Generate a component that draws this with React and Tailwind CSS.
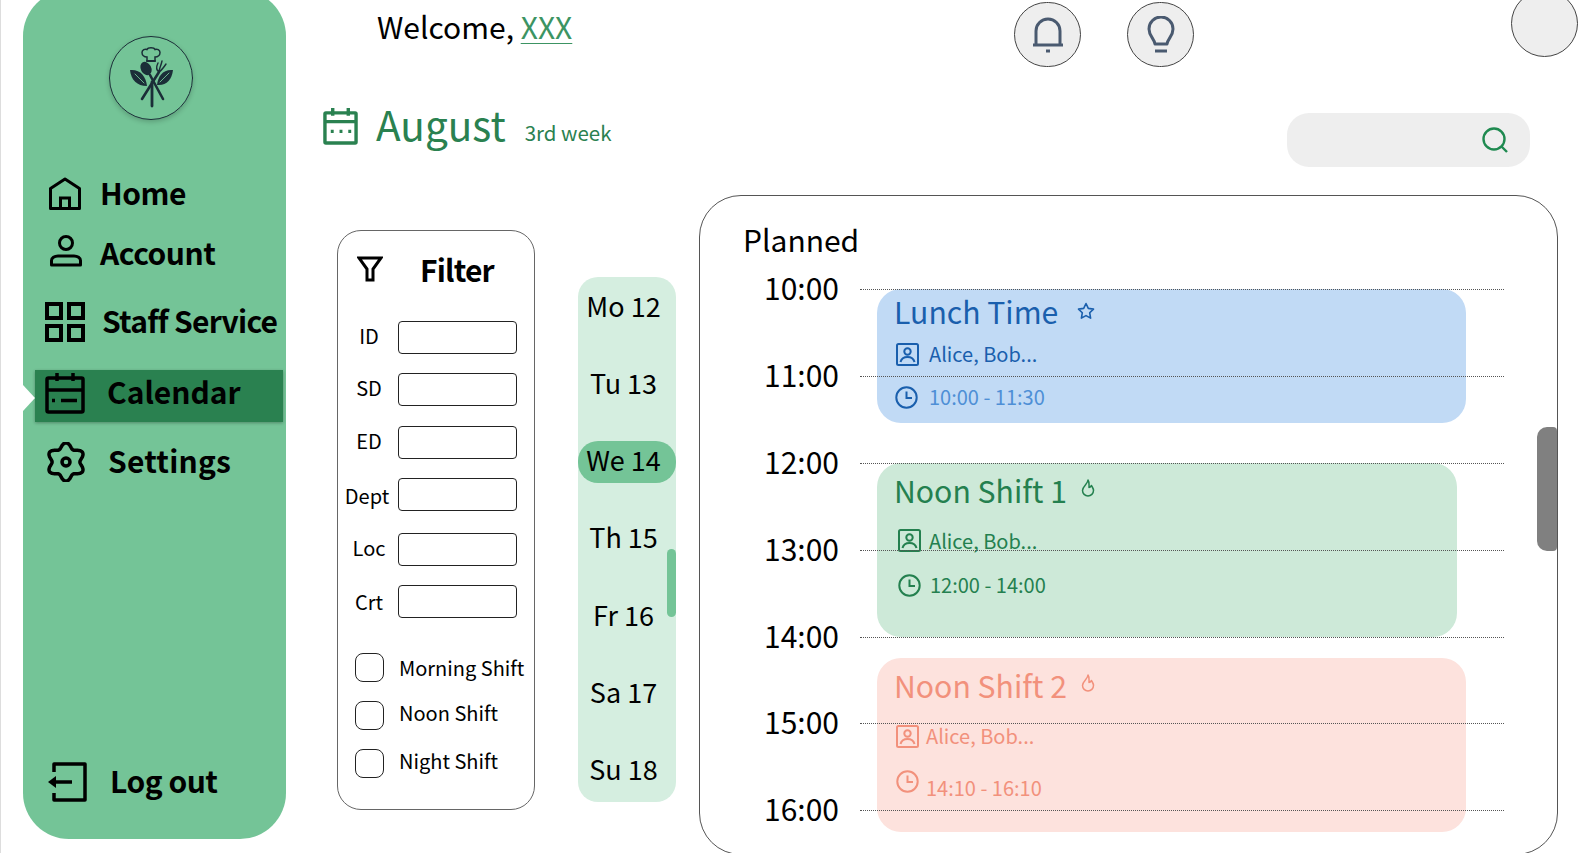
import React from 'react'

const fields = [
  { label: 'ID', rowClass: 'h-[52px]', labelClass: 'pl-[2px] pb-[4px]' },
  { label: 'SD', rowClass: 'h-[53px]', labelClass: 'pl-[2px] pb-[4px]' },
  { label: 'ED', rowClass: 'h-[52px]', labelClass: 'pl-[2px] pb-[4px]' },
  { label: 'Dept', rowClass: 'h-[55px]', labelClass: 'pr-[2px] pt-[2px]' },
  { label: 'Loc', rowClass: 'h-[52px]', labelClass: 'pl-[2px] pb-[4px]' },
  { label: 'Crt', rowClass: 'h-[52px]', labelClass: 'pl-[2px]' },
]

const shifts = [
  { label: 'Morning Shift', labelClass: 'mt-0' },
  { label: 'Noon Shift', labelClass: '-mt-[3px]' },
  { label: 'Night Shift', labelClass: '-mt-[3px]' },
]

const days = ['Mo 12', 'Tu 13', 'We 14', 'Th 15', 'Fr 16', 'Sa 17', 'Su 18']
const hours = ['10:00', '11:00', '12:00', '13:00', '14:00', '15:00', '16:00']

function HomeIcon() {
  return (
    <svg width="34" height="34" viewBox="0 0 34 34" fill="none" stroke="currentColor" strokeWidth="3">
      <path d="M2.500 31.500V11.500L17 2l14.500 9.500v20z" strokeLinejoin="round" />
      <path d="M12.500 31.500V21h9v10.500" />
    </svg>
  )
}

function AccountIcon() {
  return (
    <svg className="-mt-[6px] ml-[1px]" width="34" height="34" viewBox="0 0 34 34" fill="none" stroke="currentColor" strokeWidth="3">
      <circle cx="17" cy="9" r="6.500" />
      <path d="M9 22h16a6.500 4.500 0 0 1 6.500 4.500v4.500h-29v-4.500A6.500 4.500 0 0 1 9 22z" strokeLinejoin="round" />
    </svg>
  )
}

function GridIcon() {
  return (
    <svg width="40" height="40" viewBox="0 0 40 40" fill="none" stroke="currentColor" strokeWidth="4">
      <rect x="2" y="2" width="14" height="14" />
      <rect x="24" y="2" width="14" height="14" />
      <rect x="2" y="24" width="14" height="14" />
      <rect x="24" y="24" width="14" height="14" />
    </svg>
  )
}

function BigCalendarIcon() {
  return (
    <svg width="40" height="42" viewBox="0 0 40 42" fill="none" stroke="currentColor" strokeWidth="3.5">
      <rect x="2" y="6" width="36" height="34" rx="1.500" />
      <path d="M2 18h36M12 1v8M28 1v8M16 28.500h16M7 28.500h3" />
    </svg>
  )
}

function GearIcon() {
  const points = Array.from({ length: 120 }, (_, i) => {
    const angle = (i / 120) * Math.PI * 2 + Math.PI / 6
    const radius = 16.500 + 2.600 * Math.cos(6 * (angle - Math.PI / 6))
    return `${(20 + radius * Math.cos(angle)).toFixed(2)},${(20 + radius * Math.sin(angle)).toFixed(2)}`
  })
  return (
    <svg width="40" height="40" viewBox="0 0 40 40" fill="none" stroke="currentColor" strokeWidth="3.5">
      <polygon points={points.join(' ')} strokeLinejoin="round" />
      <circle cx="20" cy="20" r="4" />
    </svg>
  )
}

function LogoutIcon() {
  return (
    <svg width="40" height="40" viewBox="0 0 40 40" fill="none" stroke="currentColor" strokeWidth="3.5">
      <path d="M7 10V2h31v36H7v-7" strokeLinejoin="round" />
      <path d="M9 20h16" />
      <path d="M1 20l8-6v12z" fill="currentColor" stroke="none" />
    </svg>
  )
}

function Logo() {
  return (
    <svg width="84" height="84" viewBox="-42 -42 84 84" fill="none" stroke="#1b2e38" strokeLinecap="round">
      <circle cx="0" cy="0" r="41.500" strokeWidth="1" />
      <path d="M-4 -17v-4c-3 0-5-2-5-4.500s3-4 5-3c1-2.500 7-2.500 8 0 2-1 5 .5 5 3s-2 4.500-5 4.500v4z" strokeWidth="1.500" />
      <path d="M-4 -17h8" strokeWidth="1.800" />
      <ellipse cx="-5" cy="-9.500" rx="5.200" ry="7" fill="#1b2e38" stroke="none" transform="rotate(-28 -5 -9.500)" />
      <path d="M-1 -3L12 21" strokeWidth="2.600" />
      <path d="M8 -6L-9 21" strokeWidth="2.600" />
      <path d="M8 -6C5 -8 5 -11 7 -15M8 -6C8 -9 10 -12 11 -17M8 -6C11 -8 13 -11 15 -14" strokeWidth="1.400" />
      <path d="M1 4V28" strokeWidth="2.800" />
      <path d="M-21 -8C-11 -9-5-2-4 8C-14 8-20 2-21 -8z" fill="#1b2e38" stroke="none" />
      <path d="M22 -8C12 -9 7-2 6 7C15 8 21 2 22 -8z" fill="#1b2e38" stroke="none" />
      <path d="M-16 -4L-7 5M18 -5L9 4" stroke="#74c497" strokeWidth="0.900" />
    </svg>
  )
}

function NavItem({ icon, label, rowClass, textClass }) {
  return (
    <a className={`flex items-center text-black ${rowClass}`}>
      {icon}
      <span className={`pb-[4px] text-[30px] leading-none font-bold whitespace-nowrap ${textClass}`}>{label}</span>
    </a>
  )
}

function Sidebar() {
  return (
    <aside className="relative -mt-[10px] ml-[22px] flex h-[849px] w-[263px] shrink-0 flex-col rounded-[46px] bg-[#74c497]">
      <div className="mt-[46px] ml-[86px] h-[84px] w-[84px] rounded-full shadow-[0_2px_5px_rgba(0,0,0,0.2)]">
        <Logo />
      </div>
      <nav className="mt-[44px] flex flex-col">
        <NavItem icon={<HomeIcon />} label="Home" rowClass="h-[60px] pl-[25px]" textClass="ml-[18px] tracking-[-0.5px]" />
        <NavItem icon={<AccountIcon />} label="Account" rowClass="h-[60px] pl-[25px]" textClass="ml-[17px] tracking-[-0.5px]" />
        <NavItem icon={<GridIcon />} label="Staff Service" rowClass="h-[76px] pl-[22px]" textClass="ml-[17px] tracking-[-0.75px]" />
        <div className="mt-[10px] ml-[12px] h-[52px] w-[248px] bg-[#2a8150] shadow-[0_1px_3px_rgba(0,0,0,0.3)]">
          <NavItem icon={<BigCalendarIcon />} label="Calendar" rowClass="h-[46px] pl-[10px]" textClass="ml-[22px] tracking-[0px]" />
        </div>
        <NavItem icon={<GearIcon />} label="Settings" rowClass="h-[80px] pl-[23px]" textClass="ml-[22px] tracking-[0.2px]" />
      </nav>
      <div className="mt-auto mb-[27px]">
        <NavItem icon={<LogoutIcon />} label="Log out" rowClass="h-[60px] pl-[24px]" textClass="ml-[23px] tracking-[-0.5px]" />
      </div>
      <div className="absolute top-[395px] left-0 h-0 w-0 border-y-[13px] border-l-[12px] border-y-transparent border-l-white" />
    </aside>
  )
}

function Header() {
  return (
    <header className="flex h-[70px] shrink-0 items-start">
      <p className="mt-[4px] ml-[67px] text-[30px] leading-[44px] text-black">
        Welcome, <span className="text-[#3c9463] underline decoration-1 underline-offset-4">XXX</span>
      </p>
      <button className="mt-[2px] ml-[442px] flex h-[65px] w-[67px] items-center justify-center rounded-full border border-[#444] bg-[#eeeeee] text-[#4a5a70]" type="button">
        <svg width="32" height="36" viewBox="0 0 32 36" fill="none" stroke="currentColor" strokeWidth="3">
          <path d="M4 27V14a12 12 0 0 1 24 0v13" />
          <path d="M1 28h30" />
          <path d="M14 34h4" />
        </svg>
      </button>
      <button className="mt-[2px] ml-[46px] flex h-[65px] w-[67px] items-center justify-center rounded-full border border-[#444] bg-[#eeeeee] text-[#4a5a70]" type="button">
        <svg width="28" height="38" viewBox="0 0 28 38" fill="none" stroke="currentColor" strokeWidth="3">
          <path d="M8 28C7 22 2 20 2 13a12 12 0 0 1 24 0c0 7-5 9-6 15z" strokeLinejoin="round" />
          <path d="M8 35h12" />
        </svg>
      </button>
      <div className="-mt-[10px] ml-[317px] h-[67px] w-[67px] shrink-0 rounded-full border border-[#444] bg-[#eeeeee]" />
    </header>
  )
}

function MonthBar() {
  return (
    <div className="flex h-[125px] shrink-0 items-start">
      <div className="mt-[38px] ml-[13px] text-[#2a8150]">
        <svg width="35" height="37" viewBox="0 0 36 38" fill="none" stroke="currentColor" strokeWidth="3.5">
          <rect x="2" y="5" width="32" height="31" rx="1" />
          <path d="M2 14h32M10 0v8M26 0v8" />
          <path d="M8 24h3M17 24h3M26 24h3" />
        </svg>
      </div>
      <h1 className="mt-[24px] ml-[18px] text-[40.5px] leading-[60px] text-[#2a8150]">August</h1>
      <span className="mt-[47px] ml-[19px] text-[20.5px] leading-[30px] text-[#2a8150]">3rd week</span>
      <div className="mt-[43px] mr-[50px] ml-auto flex h-[54px] w-[243px] items-center justify-end rounded-[22px] bg-[#eeeeee] pr-[21px] text-[#1f8a50]">
        <svg width="28" height="28" viewBox="0 0 28 28" fill="none" stroke="currentColor" strokeWidth="2.4">
          <circle cx="13" cy="13" r="10.500" />
          <path d="M20.500 20.500L26 26" />
        </svg>
      </div>
    </div>
  )
}

function FilterPanel() {
  return (
    <section className="mt-[35px] ml-[27px] h-[580px] w-[198px] shrink-0 rounded-[24px] border border-[#666] bg-white">
      <div className="flex h-[90px] items-start">
        <svg className="mt-[25px] ml-[19px]" width="26" height="26" viewBox="0 0 26 26" fill="none" stroke="black" strokeWidth="3">
          <path d="M2 2h22l-8 11v11h-6V13z" />
        </svg>
        <h2 className="mt-[16px] ml-[37px] text-[30px] leading-[44px] font-bold tracking-[-0.8px] text-black">Filter</h2>
      </div>
      {fields.map((field) => (
        <div className={`flex items-start ${field.rowClass}`} key={field.label}>
          <span className={`flex h-[33px] w-[60px] items-center justify-center text-[20px] leading-none text-black ${field.labelClass}`}>{field.label}</span>
          <input className="h-[33px] w-[119px] rounded-[4px] border border-[#222] bg-white" type="text" />
        </div>
      ))}
      <div className="mt-[16px] flex flex-col">
        {shifts.map((shift) => (
          <label className="flex h-[48px] items-start" key={shift.label}>
            <span className="ml-[17px] h-[29px] w-[29px] rounded-[8px] border border-[#222] bg-white" />
            <span className={`ml-[15px] text-[20px] leading-[30px] whitespace-nowrap text-black ${shift.labelClass}`}>{shift.label}</span>
          </label>
        ))}
      </div>
    </section>
  )
}

function DayStrip() {
  return (
    <section className="relative mt-[82px] ml-[43px] flex h-[525px] w-[98px] shrink-0 flex-col rounded-[20px] bg-[#d5eee0]">
      {days.map((day) => (
        <div className={`mb-[35.3px] flex h-[42px] shrink-0 items-center justify-center rounded-[20px] pr-[7px] pb-[4px] text-[27px] leading-none text-black first:mt-[9px] ${day === 'We 14' ? 'bg-[#74c497]' : ''}`} key={day}>
          {day}
        </div>
      ))}
      <div className="absolute top-[272px] right-0 h-[68px] w-[9px] rounded-full bg-[#74c497]" />
    </section>
  )
}

function PersonBox() {
  return (
    <svg width="23" height="23" viewBox="0 0 23 23" fill="none" stroke="currentColor" strokeWidth="2">
      <rect x="1" y="1" width="21" height="21" rx="1.500" />
      <circle cx="11.500" cy="8.500" r="3.200" />
      <path d="M4.500 19c1-4 4-5 7-5s6 1 7 5" />
    </svg>
  )
}

function ClockIcon() {
  return (
    <svg width="23" height="23" viewBox="0 0 23 23" fill="none" stroke="currentColor" strokeWidth="2">
      <circle cx="11.500" cy="11.500" r="10.200" />
      <path d="M11.500 5.500v6.500h5.500" />
    </svg>
  )
}

function StarIcon() {
  return (
    <svg className="ml-[19px]" width="18" height="18" viewBox="0 0 18 18" fill="none" stroke="currentColor" strokeWidth="1.6">
      <path d="M9 1.500l2.300 4.900 5.200.7-3.800 3.700.9 5.300L9 13.600l-4.600 2.500.9-5.300L1.500 7.100l5.200-.7z" strokeLinejoin="round" />
    </svg>
  )
}

function FlameIcon() {
  return (
    <svg className="ml-[14px] -mt-[4px]" width="14" height="18" viewBox="0 0 14 18" fill="none" stroke="currentColor" strokeWidth="1.5">
      <path d="M7 1c0 4-5.500 6-5.500 10.500a5.500 5.500 0 0 0 11 0C12.500 9 11 8 10.500 6.500 9.500 8 8.500 8.500 8 8.500 8 6 8.500 3 7 1z" strokeLinejoin="round" />
    </svg>
  )
}

function ShiftCard({ cardClass, color, title, badge, people, time, timeColor, titleRow, peopleRow, timeRow, peopleGap, timeGap }) {
  return (
    <article className={`absolute left-[177px] rounded-[24px] ${cardClass}`}>
      <div className={`flex items-center pl-[17px] ${color} ${titleRow}`}>
        <h3 className="text-[30.2px] leading-none font-normal whitespace-nowrap">{title}</h3>
        {badge}
      </div>
      <div className={`flex items-center ${color} ${peopleRow}`}>
        <PersonBox />
        <span className={`text-[20px] leading-[30px] ${peopleGap}`}>{people}</span>
      </div>
      <div className={`flex ${color} ${timeRow}`}>
        <ClockIcon />
        <span className={`text-[20px] leading-[30px] ${timeColor} ${timeGap}`}>{time}</span>
      </div>
    </article>
  )
}

function PlannedPanel() {
  return (
    <section className="relative ml-[23px] h-[660px] w-[859px] shrink-0 overflow-hidden rounded-[42px] border border-[#555] bg-white">
      <h2 className="mt-[21px] ml-[43px] h-[46px] text-[30px] leading-[44px] font-normal text-black">Planned</h2>
      <ShiftCard
        cardClass="top-[93px] h-[134px] w-[589px] bg-[#c1daf5]"
        color="text-[#1a5fad]"
        title="Lunch Time"
        badge={<StarIcon />}
        people="Alice, Bob..."
        time="10:00 - 11:30"
        timeColor="text-[#4e8fd6]"
        titleRow="h-[44px]"
        peopleRow="mt-[6px] pl-[19px]"
        timeRow="mt-[13px] items-center pl-[18px]"
        peopleGap="ml-[10px]"
        timeGap="ml-[11px]"
      />
      <ShiftCard
        cardClass="top-[267px] h-[174px] w-[580px] bg-[#cde9d8]"
        color="text-[#24804f]"
        title="Noon Shift 1"
        badge={<FlameIcon />}
        people="Alice, Bob..."
        time="12:00 - 14:00"
        timeColor="text-[#24804f]"
        titleRow="h-[54px]"
        peopleRow="mt-[7px] pl-[21px]"
        timeRow="mt-[14px] items-center pl-[21px]"
        peopleGap="ml-[8px] mt-[2px]"
        timeGap="ml-[9px]"
      />
      <ShiftCard
        cardClass="top-[462px] h-[174px] w-[589px] bg-[#fde2dd]"
        color="text-[#f2917c]"
        title="Noon Shift 2"
        badge={<FlameIcon />}
        people="Alice, Bob..."
        time="14:10 - 16:10"
        timeColor="text-[#f2917c]"
        titleRow="h-[54px]"
        peopleRow="mt-[9px] pl-[19px]"
        timeRow="mt-[19px] items-start pl-[19px]"
        peopleGap="ml-[7px]"
        timeGap="ml-[7px] mt-[3px]"
      />
      <div className="relative -mt-[18.5px] flex flex-col">
        {hours.map((hour) => (
          <div className="flex h-[86.8px] shrink-0 items-center pr-[53px] pl-[64px]" key={hour}>
            <span className="w-[96px] pb-[1px] text-[30px] leading-none text-black">{hour}</span>
            <span className="mt-[4px] flex-1 border-t border-dotted border-[#555]" />
          </div>
        ))}
      </div>
      <div className="absolute top-[231px] right-0 h-[124px] w-[20px] rounded-l-[10px] rounded-r-[4px] bg-[#808080]" />
    </section>
  )
}

export default function App() {
  return (
    <div className="flex h-[853px] w-[1580px] overflow-hidden border-l border-[#dddddd] bg-white font-['Noto_Sans_CJK_SC','Noto_Sans',sans-serif]">
      <Sidebar />
      <main className="flex min-w-0 flex-1 flex-col pl-[24px]">
        <Header />
        <MonthBar />
        <div className="flex items-start">
          <FilterPanel />
          <DayStrip />
          <PlannedPanel />
        </div>
      </main>
    </div>
  )
}
